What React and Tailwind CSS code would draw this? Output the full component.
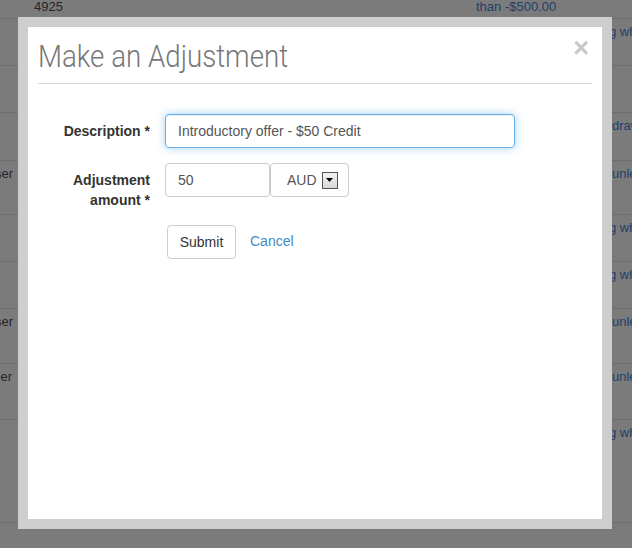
import React from "react";

const rows = [
  { h: "h-[19px]", left: "", right: "" },
  { h: "h-[47px]", left: "", right: "g while", pad: "w-[596px]" },
  { h: "h-[47px]", left: "", right: "" },
  { h: "h-[48px]", left: "", right: "drawn", pad: "w-[599px]" },
  { h: "h-[54px]", left: "User", right: "unless", pad: "w-[599px]" },
  { h: "h-[47px]", left: "", right: "g while", pad: "w-[596px]" },
  { h: "h-[47px]", left: "", right: "g while", pad: "w-[596px]" },
  { h: "h-[55px]", left: "User", right: "unless", pad: "w-[599px]" },
  { h: "h-[56px]", left: "Partner", right: "unless", pad: "w-[600px]", lw: "w-[12px]" },
  { h: "h-[103px]", left: "", right: "g while", pad: "w-[596px]" },
];

const BackgroundTable = () => (
  <div className="flex flex-col text-[13px] leading-[14px]">
    {rows.map((row, i) => (
      <div key={i} className={`${row.h} flex overflow-hidden border-b border-[#6f6f6f]`}>
        {i === 0 ? (
          <>
            <div className="w-[34px] shrink-0" />
            <div className="w-[442px] shrink-0 text-[#262626]">4925</div>
            <div className="shrink-0 text-[#22416a] whitespace-nowrap">than -$500.00</div>
          </>
        ) : (
          <>
            <div className={`${row.lw || "w-[13px]"} shrink-0 flex justify-end overflow-hidden pt-[6px] text-[#262626] whitespace-nowrap`}>
              <span className="shrink-0">{row.left}</span>
            </div>
            <div className={`${row.pad || "w-[599px]"} shrink-0`} />
            <div className="shrink-0 pt-[6px] text-[#22416a] whitespace-nowrap">{row.right}</div>
          </>
        )}
      </div>
    ))}
  </div>
);

const App = () => {
  return (
    <div
      className="relative w-[632px] h-[548px] overflow-hidden bg-[#7b7b7b]"
      style={{ fontFamily: '"Liberation Sans", Arial, sans-serif' }}
    >
      <BackgroundTable />

      <div className="absolute left-[18px] top-[17px] w-[594px] h-[512px] bg-[#cecece] p-[10px]">
        <div className="relative h-full bg-white">
          <div className="mx-[10px] pt-[10px] pb-[8px] border-b border-[#d5d5d5]">
            <h2
              className="text-[32px] leading-[38px] font-light text-[#777] whitespace-nowrap origin-left scale-x-[0.865]"
              style={{ fontFamily: "Roboto, sans-serif" }}
            >
              Make an Adjustment
            </h2>
          </div>
          <button className="absolute right-[13px] top-[8px] text-[27px] font-bold leading-[27px] text-[#c8c8c8]">
            ×
          </button>

          <div className="mt-[30px] flex flex-col text-[14px] text-[#333]">
            <div className="flex">
              <label className="w-[122px] pt-[7px] text-right font-bold leading-[20px]">
                Description *
              </label>
              <div className="ml-[15px] w-[350px] h-[34px] flex items-center px-[12px] rounded-[4px] border border-[#66afe9] shadow-[inset_0_1px_1px_rgba(0,0,0,0.075),0_0_8px_rgba(102,175,233,0.6)] text-[#555]">
                Introductory offer - $50 Credit
              </div>
            </div>

            <div className="flex mt-[15px]">
              <label className="w-[122px] pt-[7px] text-right font-bold leading-[20px]">
                Adjustment
                <br />
                amount *
              </label>
              <div className="ml-[15px] flex self-start">
                <div className="w-[105px] h-[34px] flex items-center px-[12px] rounded-[4px] border border-[#ccc] text-[#555]">
                  50
                </div>
                <div className="w-[79px] h-[34px] flex items-center pl-[16px] rounded-[4px] border border-[#ccc] text-[#555]">
                  <span>AUD</span>
                  <span className="ml-[5px] w-[16px] h-[17px] flex items-center justify-center border border-[#555] bg-gradient-to-b from-[#f2f2f2] to-[#d8d8d8]">
                    <svg width="7" height="4" viewBox="0 0 7 4">
                      <path d="M0 0h7L3.5 4z" fill="#000" />
                    </svg>
                  </span>
                </div>
              </div>
            </div>

            <div className="flex items-center mt-[15px] ml-[139px]">
              <button className="w-[69px] h-[34px] rounded-[4px] border border-[#ccc] bg-white text-[#333]">
                Submit
              </button>
              <a className="ml-[14px] -mt-[1px] text-[#428bca]">Cancel</a>
            </div>
          </div>
        </div>
      </div>
    </div>
  );
};

export default App;
